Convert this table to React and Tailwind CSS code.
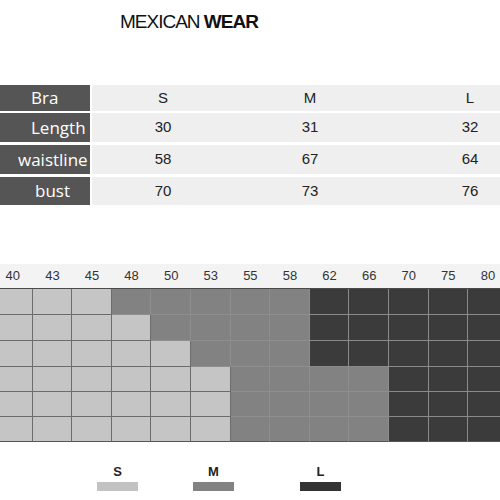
import React from 'react';

const rows = [
  { label: 'Bra', pl: 'pl-[31px]', h: 'h-[26px]', mt: 'mt-0', vals: ['S', 'M', 'L'] },
  { label: 'Length', pl: 'pl-[31px]', h: 'h-[29px]', mt: 'mt-[2px]', vals: ['30', '31', '32'] },
  { label: 'waistline', pl: 'pl-[18px]', h: 'h-[29px]', mt: 'mt-[3px]', vals: ['58', '67', '64'] },
  { label: 'bust', pl: 'pl-[35px]', h: 'h-[28px]', mt: 'mt-[3px]', vals: ['70', '73', '76'] },
];

const sizes = ['40', '43', '45', '48', '50', '53', '55', '58', '62', '66', '70', '75', '80'];

// how many S / M columns in each grid row, the rest are L
const bands = [
  [3, 5],
  [4, 4],
  [5, 3],
  [6, 4],
  [6, 4],
  [6, 4],
];

const cellClass = {
  S: 'bg-[#c5c5c5] border-[#6c6c6c]',
  M: 'bg-[#828282] border-[#8e8e8e]',
  L: 'bg-[#3b3b3b] border-[#8a8a8a]',
};

const App = () => {
  return (
    <div className="w-[500px] h-[500px] bg-white overflow-hidden font-['Liberation_Sans',Arial,sans-serif]">
      {/* Title */}
      <div className="pt-[11px] pl-[120px] text-[19px] leading-[22px] tracking-[-1px] text-[#111]">
        MEXICAN <span className="font-bold">WEAR</span>
      </div>

      {/* Size table */}
      <div className="mt-[52px]">
        {rows.map((row) => (
          <div key={row.label} className={`flex ${row.h} ${row.mt}`}>
            <div
              className={`w-[90px] bg-[#555555] text-white text-[17px] flex items-center ${row.pl} font-['Open_Sans',sans-serif]`}
            >
              {row.label}
            </div>
            <div className="ml-[2px] flex-1 bg-[#efefef] flex items-center text-[15px] text-[#222]">
              <div className="ml-[51px] w-[40px] text-center">{row.vals[0]}</div>
              <div className="ml-[107px] w-[40px] text-center">{row.vals[1]}</div>
              <div className="ml-[120px] w-[40px] text-center">{row.vals[2]}</div>
            </div>
          </div>
        ))}
      </div>

      {/* Size chart grid */}
      <div className="mt-[59px] w-[500px] overflow-hidden">
        <div className="ml-[-7px] w-[515px]">
          <div className="flex h-[25px] bg-[#f3f3f3] border-b border-[#4a4a4a]">
            {sizes.map((s) => (
              <div key={s} className="w-[39.6px] shrink-0 flex items-center justify-center text-[13px] text-[#333]">
                {s}
              </div>
            ))}
          </div>
          {bands.map(([sCount, mCount], r) => (
            <div key={r} className={`flex ${r < 3 ? 'h-[26px]' : 'h-[25px]'}`}>
              {sizes.map((s, c) => {
                const size = c < sCount ? 'S' : c < sCount + mCount ? 'M' : 'L';
                return (
                  <div
                    key={s}
                    className={`w-[39.6px] shrink-0 border-r border-b ${cellClass[size]} ${
                      r === bands.length - 1 ? 'border-b-[#555555]' : ''
                    }`}
                  />
                );
              })}
            </div>
          ))}
        </div>
      </div>

      {/* Legend */}
      <div className="mt-[22px] flex text-[13px] font-bold text-[#222]">
        <div className="ml-[97px] w-[41px] flex flex-col items-center">
          <span className="leading-[16px]">S</span>
          <div className="mt-[2px] w-[41px] h-[9px] bg-[#c2c2c2]" />
        </div>
        <div className="ml-[55px] w-[41px] flex flex-col items-center">
          <span className="leading-[16px]">M</span>
          <div className="mt-[2px] w-[41px] h-[9px] bg-[#828282]" />
        </div>
        <div className="ml-[66px] w-[41px] flex flex-col items-center">
          <span className="leading-[16px]">L</span>
          <div className="mt-[2px] w-[41px] h-[9px] bg-[#333333]" />
        </div>
      </div>
    </div>
  );
};

export default App;
